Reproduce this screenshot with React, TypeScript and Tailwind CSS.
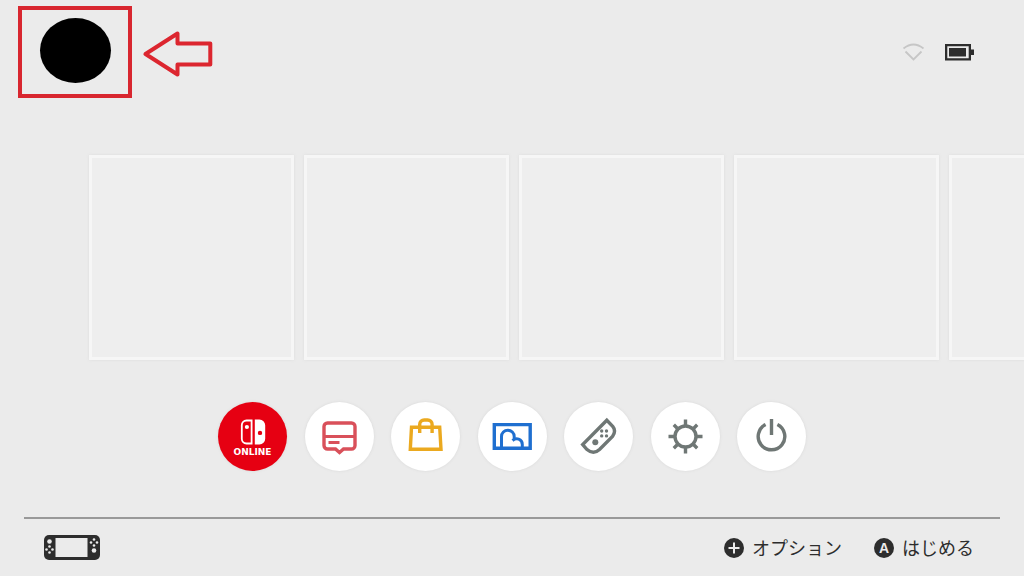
import React, { ReactNode } from "react";

const games = [1, 2, 3, 4, 5];

export default function App() {
  return (
    <div className="flex min-h-screen flex-col overflow-hidden bg-[#ebebeb] font-['Noto_Sans_CJK_JP',sans-serif] text-[#2d2d2d]">
      <Header />
      <main>
        <GameRow />
        <SystemMenu />
      </main>
      <Footer />
    </div>
  );
}

const Header = () => {
  return (
    <header className="flex items-center justify-between pt-1.5 pr-[50px] pl-[18px]">
      <div className="flex items-center gap-[11px]">
        <div className="flex h-[92px] w-[114px] justify-center border-4 border-[#d8262f] pt-2">
          <button
            aria-label="ユーザー"
            className="h-[65px] w-[71px] rounded-[50%] bg-black"
          />
        </div>
        <svg
          className="mt-1 h-[46px] w-[70px]"
          viewBox="0 0 70 46"
          fill="none"
          stroke="#dc262f"
          strokeWidth="4"
          strokeLinejoin="round"
        >
          <path d="M2.500 23 34.500 2.500V12.500H67.300V33.500H34.500V43.500Z" />
        </svg>
      </div>
      <div className="flex items-center gap-5">
        <svg className="h-[18px] w-[23px]" viewBox="0 0 23 18" fill="none" stroke="#c6c6c6" strokeWidth="1.8">
          <path d="M1.500 5.500Q11.500-2.500 21.500 5.500" />
          <path d="M3.500 8.500 11.500 16.500 19.500 8.500" />
        </svg>
        <svg className="h-[17px] w-[29px]" viewBox="0 0 29 17" fill="#2d2d2d">
          <path
            fillRule="evenodd"
            d="M0 0H26V5.500H29V11H26V16.500H0ZM2.300 2.300V14.200H23.700V2.300Z"
          />
          <path d="M4 4H21V12.500H4Z" />
        </svg>
      </div>
    </header>
  );
};

const GameRow = () => {
  return (
    <div className="mt-[57px] flex gap-2.5 pl-[89px]">
      {games.map((game) => (
        <button
          key={game}
          aria-label={`ソフト ${game}`}
          className="size-[205px] shrink-0 border-[3px] border-[#f6f6f6] bg-[#eeeeee] shadow-[0_0_3px_#dedede]"
        />
      ))}
    </div>
  );
};

const SystemMenu = () => {
  return (
    <nav className="mx-auto mt-[42px] flex max-w-[588px] justify-between">
      <button className="flex size-[69px] flex-col items-center justify-center rounded-full bg-[#e60012] pt-1 text-white shadow-[0_0_3px_#d8d8d8]">
        <svg className="h-[26px] w-[26px]" viewBox="0 0 26 26" fill="none">
          <path
            d="M11.600 1.500V24.500H6.500A4.700 4.700 0 0 1 1.800 19.800V6.200A4.700 4.700 0 0 1 6.500 1.500Z"
            stroke="white"
            strokeWidth="1.800"
          />
          <circle cx="6.900" cy="8" r="2.100" fill="white" />
          <path
            fillRule="evenodd"
            d="M14.800.500H19.400A5.800 5.800 0 0 1 25.200 6.300V19.700A5.800 5.800 0 0 1 19.400 25.500H14.800ZM22.200 13.900A2.200 2.200 0 1 0 17.800 13.900 2.200 2.200 0 1 0 22.200 13.900Z"
            fill="white"
          />
        </svg>
        <span className="font-['DejaVu_Sans',sans-serif] text-[9px] leading-[14px] font-bold">
          ONLINE
        </span>
      </button>

      <MenuButton label="ニュース" color="text-[#d9505a]">
        <path d="M22.500 21H46.500A3.500 3.500 0 0 1 50 24.500V43.500A3.500 3.500 0 0 1 46.500 47H38.500L34.500 50.500 30.500 47H22.500A3.500 3.500 0 0 1 19 43.500V24.500A3.500 3.500 0 0 1 22.500 21Z" />
        <path d="M19 34.500H50" strokeWidth="3" />
        <path d="M23.500 40.500H34.500" strokeWidth="3" />
      </MenuButton>

      <MenuButton label="ニンテンドーeショップ" color="text-[#eba91f]">
        <path d="M20.500 25.300H48.700L50 47.200H19.300Z" />
        <path d="M28.700 31V22.500A4.500 4.500 0 0 1 33.200 18H36.600A4.500 4.500 0 0 1 41.100 22.500V31" />
      </MenuButton>

      <MenuButton label="アルバム" color="text-[#1f6fd0]">
        <path d="M16.300 22.600H52.200V46.300H16.300Z" />
        <path
          d="M23.500 45.500V34.500A6.300 6.300 0 0 1 36.200 34.500V38.500M34.500 38.500C38 35.500 44.300 36.500 44.300 42.500V45.500"
          strokeWidth="3"
        />
      </MenuButton>

      <MenuButton label="コントローラー" color="text-[#6f7775]">
        <path d="M42.800 18.300 18.700 42.600 23 47.500Q29.500 53 35.500 47.500L48.500 34.500Q52.500 29 48.700 24.400Z" />
        <g fill="currentColor" stroke="none">
          <circle cx="31.300" cy="40.300" r="3" />
          <circle cx="37.700" cy="29" r="1.700" />
          <circle cx="42.500" cy="29" r="1.700" />
          <circle cx="37.700" cy="33.900" r="1.700" />
          <circle cx="42.500" cy="33.900" r="1.700" />
        </g>
      </MenuButton>

      <MenuButton label="設定" color="text-[#6f7775]">
        <circle cx="34.500" cy="34.500" r="10.500" />
        <path d="M34.500 17.500V24M34.500 45V51.500M17.500 34.500H24M45 34.500H51.500M22.800 22.800 27.200 27.200M41.800 41.800 46.200 46.200M46.200 22.800 41.800 27.200M27.200 41.800 22.800 46.200" />
      </MenuButton>

      <MenuButton label="スリープ" color="text-[#6f7775]">
        <path d="M28.600 22.600A13.300 13.300 0 1 0 40.400 22.600" />
        <path d="M34.500 17V33" />
      </MenuButton>
    </nav>
  );
};

const MenuButton = ({
  label,
  color,
  children,
}: {
  label: string;
  color: string;
  children: ReactNode;
}) => {
  return (
    <button
      aria-label={label}
      className={`size-[69px] rounded-full bg-white shadow-[0_0_3px_#d8d8d8] ${color}`}
    >
      <svg viewBox="0 0 69 69" fill="none" stroke="currentColor" strokeWidth="3.4">
        {children}
      </svg>
    </button>
  );
};

const Footer = () => {
  return (
    <footer className="mx-6 mt-auto flex h-[59px] items-center justify-between border-t-2 border-[#999999] pr-[26px] pl-5">
      <svg className="h-[25px] w-14" viewBox="0 0 56 25">
        <rect width="56" height="25" rx="5" fill="#2d2d2d" />
        <rect x="11.500" y="3" width="32" height="19" fill="#ebebeb" />
        <g fill="#ebebeb">
          <circle cx="5.500" cy="6.500" r="2.300" />
          <circle cx="5.500" cy="11.500" r="1.300" />
          <circle cx="5.500" cy="17.500" r="1.300" />
          <circle cx="2.500" cy="14.500" r="1.300" />
          <circle cx="8.500" cy="14.500" r="1.300" />
          <circle cx="50" cy="4.500" r="1.300" />
          <circle cx="50" cy="10.500" r="1.300" />
          <circle cx="47" cy="7.500" r="1.300" />
          <circle cx="53" cy="7.500" r="1.300" />
          <circle cx="50" cy="15.500" r="2.300" />
        </g>
      </svg>
      <div className="flex items-center gap-8">
        <FooterButton label="オプション">
          <svg className="size-3" viewBox="0 0 12 12" stroke="#ebebeb" strokeWidth="2">
            <path d="M6 .500V11.500M.500 6H11.500" />
          </svg>
        </FooterButton>
        <FooterButton label="はじめる">A</FooterButton>
      </div>
    </footer>
  );
};

const FooterButton = ({ label, children }: { label: string; children: ReactNode }) => {
  return (
    <button className="flex items-center gap-2">
      <span className="flex size-5 items-center justify-center rounded-full bg-[#2d2d2d] font-['Liberation_Sans',sans-serif] text-sm font-bold text-[#ebebeb]">
        {children}
      </span>
      <span className="pb-0.5 text-lg leading-6">{label}</span>
    </button>
  );
};
